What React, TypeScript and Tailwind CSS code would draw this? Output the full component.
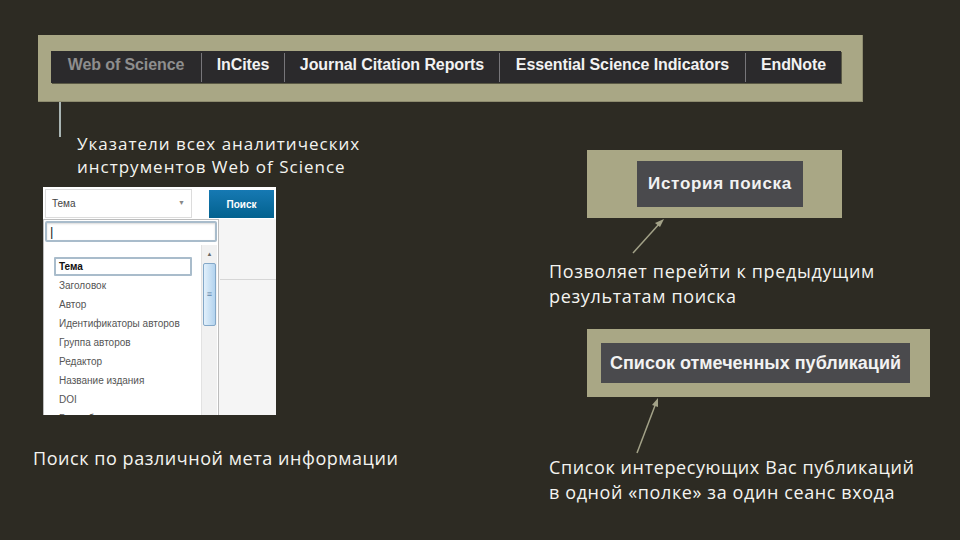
import React from "react";

const NAV: { t: string; w: string; dim?: boolean; first?: boolean }[] = [
  { t: "Web of Science", w: "w-[150px]", dim: true, first: true },
  { t: "InCites", w: "w-[83px]" },
  { t: "Journal Citation Reports", w: "w-[215px]" },
  { t: "Essential Science Indicators", w: "w-[246px]" },
  { t: "EndNote", w: "w-[96px]" },
];

const ITEMS = [
  "Заголовок",
  "Автор",
  "Идентификаторы авторов",
  "Группа авторов",
  "Редактор",
  "Название издания",
  "DOI",
  "Год публикации",
];

function Dropdown() {
  return (
    <div className="ml-[43px] mt-[9px] flex h-[228px] w-[233px] flex-col overflow-hidden bg-white font-['Liberation_Sans',Arial,sans-serif]">
      <div className="flex h-[32px] shrink-0 pl-[2px] pt-[2px]">
        <div className="flex h-[29px] w-[147px] items-center justify-between border border-[#dcdcdc] bg-white pl-[6px] pr-[6px] text-[10px] text-[#444]">
          <span>Тема</span>
          <span className="text-[7px] text-[#888]">▼</span>
        </div>
        <div className="ml-[17px] mt-[1px] flex h-[28px] w-[65px] items-center justify-center bg-gradient-to-b from-[#1679b3] to-[#03628f] text-[10px] font-bold text-white">
          Поиск
        </div>
      </div>
      <div className="flex flex-1">
        <div className="flex w-[176px] flex-col border border-[#bdbdbd] bg-white p-[1px]">
          <div className="flex h-[21px] items-center rounded-[2px] border-2 border-[#a9bccb] pl-[3px] text-[13px] leading-none text-[#222] shadow-[inset_0_1px_2px_rgba(0,0,0,0.15)]">
            |
          </div>
          <div className="mt-[3px] flex flex-1">
            <div className="flex-1 pl-[9px] pt-[12px] text-[10px] text-[#555]">
              <div className="flex h-[19px] w-[138px] items-center rounded-[1px] border-2 border-[#a9bccb] pl-[3px] font-bold text-[#111]">
                Тема
              </div>
              {ITEMS.map((it) => (
                <div key={it} className="flex h-[19px] items-center pl-[5px]">
                  {it}
                </div>
              ))}
            </div>
            <div className="flex w-[16px] flex-col border-l border-[#e2e2e2] bg-[#f1f1f1]">
              <div className="flex h-[18px] items-center justify-center text-[6px] text-[#666]">▲</div>
              <div className="mx-[1px] flex h-[63px] items-center justify-center rounded-[2px] border border-[#84a8c8] bg-gradient-to-r from-[#e2f0fb] to-[#b3d3ee] text-[9px] leading-none text-[#5f86a8]">
                ≡
              </div>
              <div className="flex-1" />
              <div className="flex h-[14px] items-start justify-center text-[6px] text-[#666]">▼</div>
            </div>
          </div>
        </div>
        <div className="flex-1 bg-[#f5f5f5]">
          <div className="ml-[1px] mt-[60px] h-px bg-[#d6d6d6]" />
        </div>
      </div>
    </div>
  );
}

export default function App() {
  return (
    <div className="relative h-[540px] w-[960px] overflow-hidden bg-[#2d2b23] text-[#f4f4f0]">
      <div className="pl-[38px] pt-[35px]">
        <div className="h-[67px] w-[825px] border-b border-r border-[#8e8c6f] bg-[#a9a785] pl-[13px] pt-[16px]">
          <nav className="flex h-[32px] w-[790px] items-center bg-[#2b2a2c] shadow-[1px_1px_0_#5a5945] font-['Liberation_Sans',Arial,sans-serif]">
            {NAV.map((n) => (
              <div
                key={n.t}
                className={`flex h-[29px] items-center justify-center pb-[4px] text-[16px] font-bold tracking-[-0.1px] ${n.w} ${
                  n.first ? "" : "border-l border-[#77767a]"
                } ${n.dim ? "text-[#8e8e8e]" : "text-[#f2f2f2]"}`}
              >
                {n.t}
              </div>
            ))}
          </nav>
        </div>
      </div>

      <div className="grid grid-cols-[549px_1fr]">
        <div className="flex flex-col">
          <div className="ml-[59px] h-[35px] w-[2px] bg-[#a9b5b3]" />
          <p className="ml-[77px] -mt-[5px] text-[17px] leading-[23px] tracking-[1px] font-['Open_Sans','Noto_Sans',sans-serif]">
            Указатели всех аналитических
            <br />
            инструментов Web of Science
          </p>
          <Dropdown />
          <p className="ml-[33px] mt-[31px] text-[18px] leading-[25px] tracking-[0.55px] font-['Open_Sans','Noto_Sans',sans-serif]">
            Поиск по различной мета информации
          </p>
        </div>

        <div className="flex flex-col font-['Open_Sans','Noto_Sans',sans-serif]">
          <div className="ml-[38px] mt-[48px] h-[68px] w-[255px] bg-[#a9a785] pl-[50px] pt-[11px]">
            <div className="flex h-[46px] w-[166px] items-center justify-center bg-[#4a4a4d] text-[17px] font-bold tracking-[0.7px] text-[#f2f2f2] font-['Liberation_Sans',Arial,sans-serif]">
              История поиска
            </div>
          </div>
          <p className="mt-[41px] text-[18px] leading-[25px] tracking-[0.65px]">
            Позволяет перейти к предыдущим
            <br />
            результатам поиска
          </p>
          <div className="ml-[38px] mt-[20px] h-[68px] w-[343px] bg-[#a9a785] pl-[14px] pt-[14px]">
            <div className="flex h-[40px] w-[309px] items-center justify-center bg-[#4a4a4d] text-[18px] font-bold text-[#f2f2f2] font-['Liberation_Sans',Arial,sans-serif]">
              Список отмеченных публикаций
            </div>
          </div>
          <p className="mt-[58px] text-[18px] leading-[25px] tracking-[0.6px]">
            Список интересующих Вас публикаций
            <br />в одной «полке» за один сеанс входа
          </p>
        </div>
      </div>

      <svg className="pointer-events-none absolute left-0 top-0" width="960" height="540" viewBox="0 0 960 540">
        <g stroke="#a3a288" strokeWidth="1.5" fill="#a3a288">
          <line x1="633" y1="253" x2="660" y2="223" />
          <path d="M664 219 L655 223 L660 227 Z" stroke="none" />
          <line x1="637" y1="453" x2="656" y2="403" />
          <path d="M658 398 L652 405 L658 407 Z" stroke="none" />
        </g>
      </svg>
    </div>
  );
}
